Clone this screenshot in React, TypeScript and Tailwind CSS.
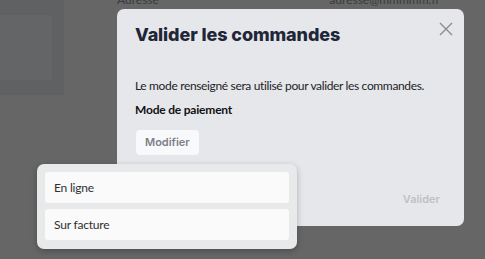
import React from "react";

export default function App() {
  return (
    <div className="relative w-[485px] h-[259px] overflow-hidden bg-[#666666]" style={{ fontFamily: "Lato, 'Noto Sans', sans-serif" }}>
      {/* dimmed page behind */}
      <div className="flex">
        <div className="w-[64px] h-[95px] bg-[#606163] pt-[14px]">
          <div className="w-[52px] h-[66px] bg-[#646567] border-t border-[#5f6062]"></div>
        </div>
        <div className="flex-1 flex justify-between pl-[53px] pr-[45px] -mt-[9px] text-[12px] text-[#3a3b3d] h-[12px]">
          <span>Adresse</span>
          <span>adresse@mmmmm.fr</span>
        </div>
      </div>

      {/* modal */}
      <div className="absolute left-[117px] top-[9px] w-[347px] h-[217px] rounded-[7px] bg-[#e6e7ea] pl-[18px] pr-[11px] flex flex-col">
        <div className="flex justify-between items-start pt-[13px]">
          <h2 className="text-[18px] leading-[26px] font-extrabold text-[#1e2638] tracking-[-0.1px]" style={{ fontFamily: "Inter, sans-serif" }}>
            Valider les commandes
          </h2>
          <svg width="14" height="14" viewBox="0 0 14 14" className="mt-[0px]" fill="none" stroke="#888b92" strokeWidth="1.4">
            <path d="M1 1 L13 13 M13 1 L1 13" />
          </svg>
        </div>
        <p className="mt-[30px] text-[12px] leading-[16px] text-[#222327] whitespace-nowrap tracking-[-0.35px]">
          Le mode renseigné sera utilisé pour valider les commandes.
        </p>
        <p className="mt-[8px] text-[12px] leading-[16px] font-bold text-[#111214] tracking-[-0.2px]">Mode de paiement</p>
        <div className="mt-[10px]">
          <button className="h-[25px] px-[9px] rounded-[4px] bg-[#f8f9fa] text-[11px] font-semibold text-[#7c8088] ml-[1px]" style={{ fontFamily: "Inter, sans-serif" }}>
            Modifier
          </button>
        </div>
        <div className="mt-auto mb-[19px] flex justify-end pr-[13px]">
          <span className="text-[11px] font-semibold text-[#bfc1c6]" style={{ fontFamily: "Inter, sans-serif" }}>Valider</span>
        </div>
      </div>

      {/* dropdown */}
      <div className="absolute left-[37px] top-[164px] w-[260px] h-[85px] rounded-[7px] bg-[#e8e9eb] shadow-[0_2px_6px_rgba(0,0,0,0.25)] p-[8px] flex flex-col gap-[6px]">
        <div className="h-[31px] rounded-[3px] bg-[#fafafa] flex items-center pl-[9px] text-[12px] tracking-[-0.2px] text-[#2e3034]">En ligne</div>
        <div className="h-[31px] rounded-[3px] bg-[#fafafa] flex items-center pl-[9px] text-[12px] tracking-[-0.2px] text-[#2e3034]">Sur facture</div>
      </div>
    </div>
  );
}
